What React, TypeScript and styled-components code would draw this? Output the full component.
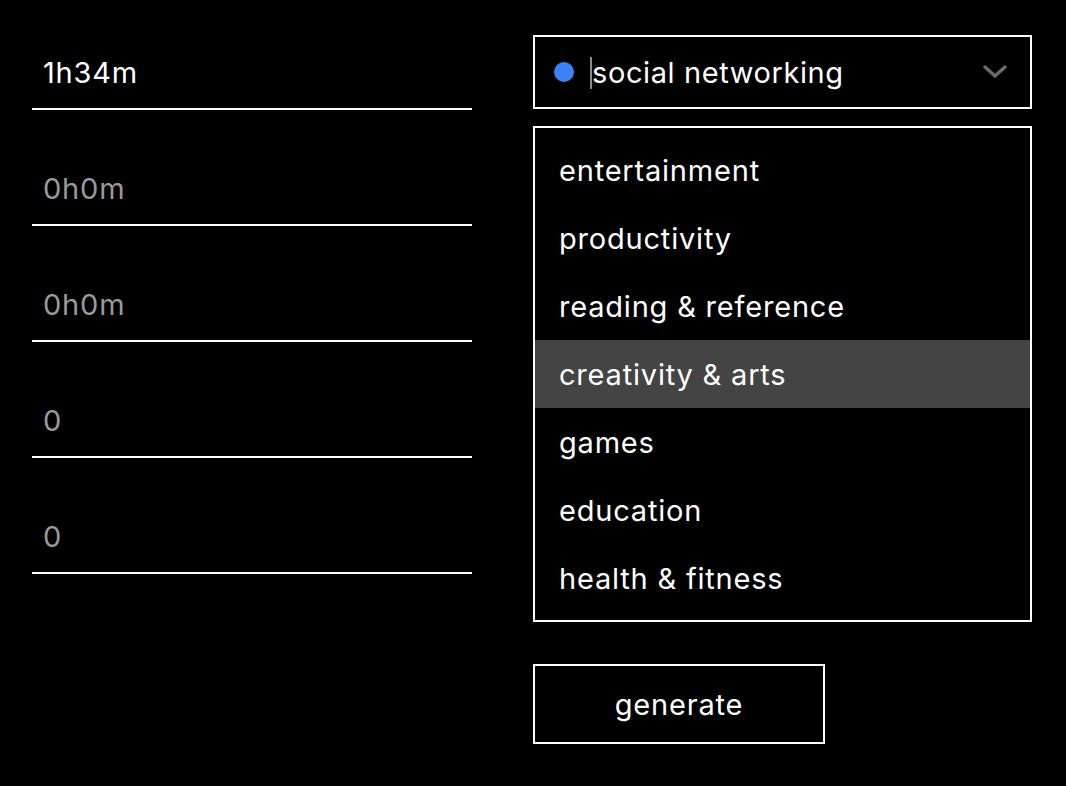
import React from "react";
import styled, { createGlobalStyle } from "styled-components";

const Global = createGlobalStyle`
  html, body { margin: 0; padding: 0; background: #000; }
  body { font-family: Inter, "Noto Sans", sans-serif; color: #fff; }
  * { box-sizing: border-box; }
`;

const Page = styled.div`
  display: grid;
  grid-template-columns: 440px 499px;
  column-gap: 61px;
  padding: 35px 32px;
  min-height: 786px;
  background: #000;
  font-size: 29px;
  letter-spacing: 0.8px;
`;

const LeftCol = styled.div`
  display: flex;
  flex-direction: column;
  gap: 41px;
`;

const Field = styled.div<{ $placeholder?: boolean }>`
  height: 75px;
  border-bottom: 2px solid #fff;
  display: flex;
  align-items: center;
  padding: 1px 0 0 11px;
  color: ${(p) => (p.$placeholder ? "#9a9a9a" : "#fff")};
`;

const RightCol = styled.div`
  display: flex;
  flex-direction: column;
`;

const Select = styled.div`
  height: 74px;
  border: 2px solid #fff;
  display: flex;
  align-items: center;
  padding: 1px 22px 0 19px;
  letter-spacing: 0.6px;
`;

const Dot = styled.span`
  width: 20px;
  height: 20px;
  border-radius: 50%;
  background: #3b82f6;
  flex: none;
  margin-top: -1px;
`;

const Caret = styled.span`
  width: 2px;
  height: 32px;
  background: #8a8a8a;
  margin-left: 16px;
  flex: none;
`;

const SelectText = styled.span`
  flex: 1;
`;

const Chevron = styled.svg`
  flex: none;
  margin-top: -1px;
`;

const List = styled.div`
  margin-top: 17px;
  height: 496px;
  border: 2px solid #fff;
  padding: 8px 0;
  display: flex;
  flex-direction: column;
`;

const Item = styled.div<{ $active?: boolean }>`
  height: 68px;
  display: flex;
  align-items: center;
  padding: 1px 0 0 24px;
  background: ${(p) => (p.$active ? "#444444" : "transparent")};
`;

const Button = styled.button`
  margin-top: 42px;
  width: 292px;
  height: 80px;
  border: 2px solid #fff;
  background: #000;
  color: #fff;
  font-family: inherit;
  font-size: 29px;
  letter-spacing: 0.8px;
  padding: 1px 0 0;
`;

const items = [
  "entertainment",
  "productivity",
  "reading & reference",
  "creativity & arts",
  "games",
  "education",
  "health & fitness",
];

export default function App() {
  return (
    <>
      <Global />
      <Page>
        <LeftCol>
          <Field>1h34m</Field>
          <Field $placeholder>0h0m</Field>
          <Field $placeholder>0h0m</Field>
          <Field $placeholder>0</Field>
          <Field $placeholder>0</Field>
        </LeftCol>
        <RightCol>
          <Select>
            <Dot />
            <Caret />
            <SelectText>social networking</SelectText>
            <Chevron width="26" height="16" viewBox="0 0 26 16">
              <path
                d="M3 3 L13 12 L23 3"
                fill="none"
                stroke="#6b6b6b"
                strokeWidth="3.5"
                strokeLinecap="round"
                strokeLinejoin="round"
              />
            </Chevron>
          </Select>
          <List>
            {items.map((it) => (
              <Item key={it} $active={it === "creativity & arts"}>
                {it}
              </Item>
            ))}
          </List>
          <Button>generate</Button>
        </RightCol>
      </Page>
    </>
  );
}
